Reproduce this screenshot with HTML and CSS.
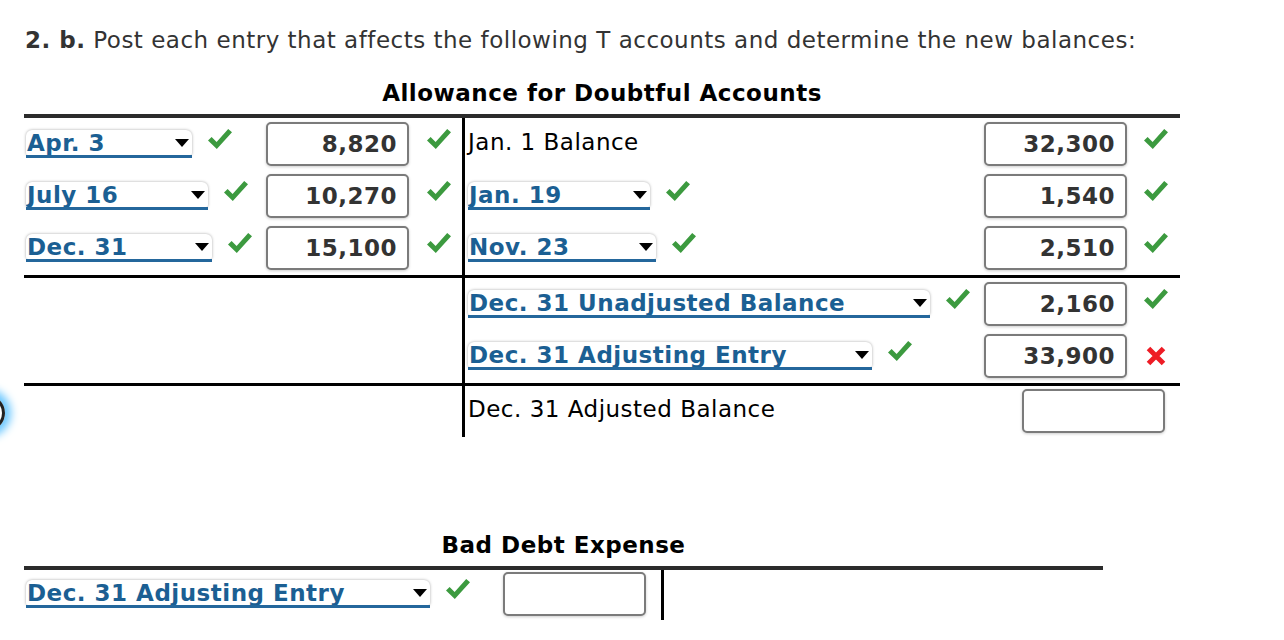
FILE: index.html
```html
<!DOCTYPE html>
<html lang="en">
<head>
<meta charset="utf-8">
<title>T accounts</title>
<link rel="stylesheet" href="styles.css">
</head>
<body>
<div class="page">
  <p class="prompt"><b>2. b.</b> Post each entry that affects the following T accounts and determine the new balances:</p>

  <section class="taccount allowance">
    <h2 class="t-title">Allowance for Doubtful Accounts</h2>

    <div class="block block-top">
      <div class="side debit">
        <div class="drow">
          <div class="pick">
            <div class="dd w166"><div class="dd-box"><span>Apr. 3</span><i class="arrow"></i></div><div class="dd-bar"></div></div>
            <svg class="ok" viewBox="0 0 24 20"><path d="M0 11.5 L3.6 8 L8.6 13 L20.2 0 L24 3.2 L8.8 20 Z"/></svg>
          </div>
          <input class="amt" type="text" value="8,820" readonly>
          <svg class="ok" viewBox="0 0 24 20"><path d="M0 11.5 L3.6 8 L8.6 13 L20.2 0 L24 3.2 L8.8 20 Z"/></svg>
        </div>
        <div class="drow">
          <div class="pick">
            <div class="dd w182"><div class="dd-box"><span>July 16</span><i class="arrow"></i></div><div class="dd-bar"></div></div>
            <svg class="ok" viewBox="0 0 24 20"><path d="M0 11.5 L3.6 8 L8.6 13 L20.2 0 L24 3.2 L8.8 20 Z"/></svg>
          </div>
          <input class="amt" type="text" value="10,270" readonly>
          <svg class="ok" viewBox="0 0 24 20"><path d="M0 11.5 L3.6 8 L8.6 13 L20.2 0 L24 3.2 L8.8 20 Z"/></svg>
        </div>
        <div class="drow">
          <div class="pick">
            <div class="dd w186"><div class="dd-box"><span>Dec. 31</span><i class="arrow"></i></div><div class="dd-bar"></div></div>
            <svg class="ok" viewBox="0 0 24 20"><path d="M0 11.5 L3.6 8 L8.6 13 L20.2 0 L24 3.2 L8.8 20 Z"/></svg>
          </div>
          <input class="amt" type="text" value="15,100" readonly>
          <svg class="ok" viewBox="0 0 24 20"><path d="M0 11.5 L3.6 8 L8.6 13 L20.2 0 L24 3.2 L8.8 20 Z"/></svg>
        </div>
      </div>
      <div class="side credit">
        <div class="crow">
          <div class="pick"><span class="label">Jan. 1 Balance</span></div>
          <input class="amt" type="text" value="32,300" readonly>
          <svg class="ok" viewBox="0 0 24 20"><path d="M0 11.5 L3.6 8 L8.6 13 L20.2 0 L24 3.2 L8.8 20 Z"/></svg>
        </div>
        <div class="crow">
          <div class="pick">
            <div class="dd w182"><div class="dd-box"><span>Jan. 19</span><i class="arrow"></i></div><div class="dd-bar"></div></div>
            <svg class="ok" viewBox="0 0 24 20"><path d="M0 11.5 L3.6 8 L8.6 13 L20.2 0 L24 3.2 L8.8 20 Z"/></svg>
          </div>
          <input class="amt" type="text" value="1,540" readonly>
          <svg class="ok" viewBox="0 0 24 20"><path d="M0 11.5 L3.6 8 L8.6 13 L20.2 0 L24 3.2 L8.8 20 Z"/></svg>
        </div>
        <div class="crow">
          <div class="pick">
            <div class="dd w188"><div class="dd-box"><span>Nov. 23</span><i class="arrow"></i></div><div class="dd-bar"></div></div>
            <svg class="ok" viewBox="0 0 24 20"><path d="M0 11.5 L3.6 8 L8.6 13 L20.2 0 L24 3.2 L8.8 20 Z"/></svg>
          </div>
          <input class="amt" type="text" value="2,510" readonly>
          <svg class="ok" viewBox="0 0 24 20"><path d="M0 11.5 L3.6 8 L8.6 13 L20.2 0 L24 3.2 L8.8 20 Z"/></svg>
        </div>
      </div>
    </div>

    <div class="block block-mid">
      <div class="side debit"></div>
      <div class="side credit">
        <div class="crow">
          <div class="pick">
            <div class="dd w462"><div class="dd-box"><span>Dec. 31 Unadjusted Balance</span><i class="arrow"></i></div><div class="dd-bar"></div></div>
            <svg class="ok" viewBox="0 0 24 20"><path d="M0 11.5 L3.6 8 L8.6 13 L20.2 0 L24 3.2 L8.8 20 Z"/></svg>
          </div>
          <input class="amt" type="text" value="2,160" readonly>
          <svg class="ok" viewBox="0 0 24 20"><path d="M0 11.5 L3.6 8 L8.6 13 L20.2 0 L24 3.2 L8.8 20 Z"/></svg>
        </div>
        <div class="crow">
          <div class="pick">
            <div class="dd w404"><div class="dd-box"><span>Dec. 31 Adjusting Entry</span><i class="arrow"></i></div><div class="dd-bar"></div></div>
            <svg class="ok" viewBox="0 0 24 20"><path d="M0 11.5 L3.6 8 L8.6 13 L20.2 0 L24 3.2 L8.8 20 Z"/></svg>
          </div>
          <input class="amt" type="text" value="33,900" readonly>
          <svg class="bad" viewBox="0 0 20 20"><path d="M2.5 2.5 L17.5 17.5 M17.5 2.5 L2.5 17.5"/></svg>
        </div>
      </div>
    </div>

    <div class="block block-end">
      <div class="side debit"></div>
      <div class="side credit">
        <div class="crow last">
          <div class="pick"><span class="label">Dec. 31 Adjusted Balance</span></div>
          <input class="amt" type="text" value="" readonly>
        </div>
      </div>
    </div>
  </section>

  <section class="taccount expense">
    <h2 class="t-title">Bad Debt Expense</h2>
    <div class="block block-top">
      <div class="side debit">
        <div class="erow">
          <div class="pick">
            <div class="dd w404"><div class="dd-box"><span>Dec. 31 Adjusting Entry</span><i class="arrow"></i></div><div class="dd-bar"></div></div>
            <svg class="ok" viewBox="0 0 24 20"><path d="M0 11.5 L3.6 8 L8.6 13 L20.2 0 L24 3.2 L8.8 20 Z"/></svg>
          </div>
          <input class="amt" type="text" value="" readonly>
        </div>
      </div>
      <div class="side credit"></div>
    </div>
  </section>

  <div class="focus-ring"></div>
</div>
</body>
</html>
```

FILE: styles.css
```css
html, body {
  margin: 0;
  padding: 0;
  background: #fff;
}

body {
  font-family: "DejaVu Sans", Verdana, sans-serif;
  color: #333;
  overflow: hidden;
}

.page {
  position: relative;
  width: 1284px;
  height: 640px;
}

.prompt {
  margin: 0;
  padding: 27px 0 0 25px;
  font-size: 23px;
  letter-spacing: 0.5px;
  line-height: 26px;
  color: #333;
  white-space: nowrap;
}

.prompt b {
  font-weight: bold;
}

.taccount {
  margin-left: 24px;
}

.allowance {
  width: 1156px;
  margin-top: 27px;
}

.expense {
  width: 1079px;
  margin-top: 95px;
}

.t-title {
  margin: 0 0 8px;
  text-align: center;
  font-size: 23px;
  letter-spacing: 0.5px;
  line-height: 26px;
  font-weight: bold;
  color: #000;
}

.block {
  display: grid;
  grid-template-columns: 441px 1fr;
  border-top: 3px solid #000;
}

.block-top {
  border-top: 4px solid #2b2b2b;
}

.expense .block {
  grid-template-columns: 640px 1fr;
}

.side.debit {
  border-right: 3px solid #000;
  box-sizing: border-box;
}

.allowance .block-top .side,
.allowance .block-mid .side {
  padding: 4px 0 5px;
  display: flex;
  flex-direction: column;
  gap: 8px;
}

.allowance .block-end .side {
  padding: 3px 0 3px;
  height: 51px;
  box-sizing: border-box;
}

.expense .side {
  padding: 2px 0 3px;
  height: 50px;
  box-sizing: border-box;
}

.drow {
  display: grid;
  grid-template-columns: 240px 143px 44px;
  align-items: center;
  padding-left: 2px;
  height: 44px;
}

.crow {
  display: grid;
  grid-template-columns: 516px 143px 44px;
  align-items: center;
  padding-left: 3px;
  height: 44px;
}

.drow > .ok {
  margin-left: 18px;
}

.crow > .ok {
  margin-left: 17px;
}

.crow > .bad {
  margin-left: 19px;
}

.crow.last {
  grid-template-columns: 554px 143px;
}

.erow {
  display: grid;
  grid-template-columns: 477px 143px;
  align-items: center;
  padding-left: 2px;
  height: 44px;
}

.pick {
  display: flex;
  align-items: center;
  gap: 16px;
  height: 44px;
}

.label {
  font-size: 23px;
  letter-spacing: 0.5px;
  line-height: 26px;
  color: #000;
  margin-top: -4px;
  white-space: nowrap;
}

/* dropdown lookalike */
.dd {
  display: flex;
  flex-direction: column;
  flex: none;
  box-sizing: border-box;
}

.dd-box {
  box-sizing: border-box;
  height: 25px;
  background: #fff;
  border-radius: 6px 6px 2px 2px;
  box-shadow: 0 0 3px rgba(0, 0, 0, 0.35);
  display: flex;
  align-items: center;
  justify-content: space-between;
  padding: 0 3px 0 1px;
  color: #1b5f93;
  font-weight: bold;
  font-size: 23px;
  letter-spacing: 0.5px;
  line-height: 25px;
  white-space: nowrap;
  overflow: hidden;
}

.dd-box span {
  padding-top: 2px;
}

.dd-bar {
  height: 3px;
  background: #24679c;
}

.arrow {
  display: block;
  flex: none;
  width: 0;
  height: 0;
  border-left: 7px solid transparent;
  border-right: 7px solid transparent;
  border-top: 8px solid #000;
  margin-top: 1px;
}

.w166 { width: 166px; }
.w182 { width: 182px; }
.w186 { width: 186px; }
.w188 { width: 188px; }
.w404 { width: 404px; }
.w462 { width: 462px; }

/* amount input */
.amt {
  box-sizing: border-box;
  width: 143px;
  height: 44px;
  margin: 0;
  border: 2px solid #7b7b7b;
  border-radius: 5px;
  box-shadow: 0 1px 3px rgba(0, 0, 0, 0.2);
  background: #fff;
  font-family: "DejaVu Sans", Verdana, sans-serif;
  font-size: 23px;
  letter-spacing: 0.5px;
  font-weight: bold;
  color: #333;
  text-align: right;
  padding: 0 10px 0 4px;
  outline: none;
}

.ok {
  width: 24px;
  height: 20px;
  flex: none;
  margin-top: -10px;
}

.ok path {
  fill: #3c9a3f;
}

.bad {
  width: 20px;
  height: 20px;
}

.bad path {
  fill: none;
  stroke: #ee1c25;
  stroke-width: 5;
  stroke-linecap: butt;
}

.focus-ring {
  position: absolute;
  left: -31px;
  top: 395px;
  width: 30px;
  height: 30px;
  border: 3px solid #222;
  border-radius: 50%;
  box-shadow: 0 0 8px 6px #6cc8ff;
}
```
